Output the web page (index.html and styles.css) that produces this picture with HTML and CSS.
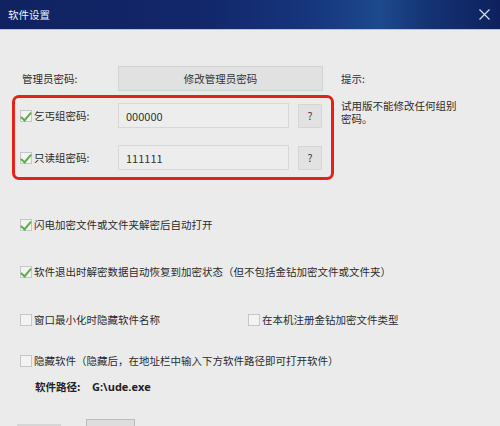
FILE: index.html
```
<!DOCTYPE html>
<html lang="zh-CN">
<head>
    <meta charset="UTF-8">
    <title>软件设置</title>
    <link rel="stylesheet" href="styles.css">
</head>
<body>
<div class="window">
    <div class="titlebar">
        <span class="title">软件设置</span>
        <svg class="close" width="11" height="11" viewBox="0 0 11 11">
            <path d="M0.5 0.5 L10.5 10.5 M10.5 0.5 L0.5 10.5" stroke="#d4dbec" stroke-width="1.3" fill="none"/>
        </svg>
    </div>

    <div class="content">
        <div class="pw-grid">
            <div class="admin-row">
                <span class="admin-label">管理员密码:</span>
                <button class="btn wide">修改管理员密码</button>
            </div>
            <div class="hint-title">提示:</div>

            <div class="group-box">
                <div class="group-row">
                    <label class="check-label"><span class="box checked"></span>乞丐组密码:</label>
                    <input class="field" type="text" value="000000">
                    <button class="btn ask">?</button>
                </div>
                <div class="group-row">
                    <label class="check-label"><span class="box checked"></span>只读组密码:</label>
                    <input class="field" type="text" value="111111">
                    <button class="btn ask">?</button>
                </div>
            </div>
            <p class="hint-text">试用版不能修改任何组别密码。</p>
        </div>

        <div class="options">
            <label class="option first"><span class="box checked"></span>闪电加密文件或文件夹解密后自动打开</label>
            <label class="option gap-a"><span class="box checked"></span>软件退出时解密数据自动恢复到加密状态（但不包括金钻加密文件或文件夹）</label>
            <div class="option-pair gap-b">
                <label class="option"><span class="box"></span>窗口最小化时隐藏软件名称</label>
                <label class="option"><span class="box"></span>在本机注册金钻加密文件类型</label>
            </div>
            <label class="option gap-c"><span class="box"></span>隐藏软件（隐藏后，在地址栏中输入下方软件路径即可打开软件）</label>
            <div class="path-row">
                <span class="path-label">软件路径:</span>
                <span class="path-value">G:\ude.exe</span>
            </div>
        </div>

        <div class="bottom-row">
            <span class="bottom-mark"></span>
            <button class="btn small"></button>
        </div>
    </div>
</div>

<script>
    // 勾选框点击切换
    document.querySelectorAll('.box').forEach(box => {
        box.parentNode.addEventListener('click', () => {
            box.classList.toggle('checked');
        });
    });
</script>
</body>
</html>
```

FILE: styles.css
```
* {
    margin: 0;
    padding: 0;
    box-sizing: border-box;
    font-family: "Noto Sans CJK SC", "Noto Sans", sans-serif;
}

body {
    width: 500px;
    height: 426px;
    overflow: hidden;
    background: #ebebeb;
    color: #2b2b2b;
    font-size: 10.5px;
}

.window {
    height: 100%;
}

/* 标题栏 */
.titlebar {
    height: 30px;
    display: flex;
    align-items: center;
    justify-content: space-between;
    padding: 0 10px 0 8px;
    background: linear-gradient(90deg, #102260 0%, #12276a 40%, #16357c 62%, #1c4a8d 76%, #143272 86%, #0e215e 100%);
    border-bottom: 1px solid #b5c4dc;
}

.title {
    color: #eef1f8;
    font-size: 10.5px;
    line-height: 14px;
}

.close {
    display: block;
}

.content {
    padding: 36px 0 0 12px;
}

/* 密码区 */
.pw-grid {
    display: grid;
    grid-template-columns: 322px auto;
    column-gap: 7px;
    row-gap: 4px;
}

.admin-row {
    display: flex;
    align-items: center;
    margin-left: 8px;
    height: 25px;
}

.admin-label {
    width: 98px;
    padding-left: 2px;
}

.hint-title {
    align-self: center;
}

.btn {
    font-size: 10.5px;
    color: #333;
    background: #e1e1e1;
    border: 1px solid #d3d3d3;
}

.wide {
    width: 205px;
    height: 25px;
}

.group-box {
    border: 3px solid #e2231c;
    border-radius: 7px;
    padding: 5px 0 7px 5px;
    display: flex;
    flex-direction: column;
    gap: 17px;
}

.group-row {
    display: flex;
    align-items: center;
    height: 25px;
}

.check-label {
    width: 98px;
    display: flex;
    align-items: center;
    gap: 2px;
    line-height: 14px;
}

.field {
    width: 171px;
    height: 25px;
    padding-left: 7px;
    background: #ededed;
    border: 1px solid #d8d8d8;
    font-size: 11px;
    color: #333;
}

.ask {
    width: 24px;
    height: 24px;
    margin-left: 9px;
    background: #e2e2e2;
    border-color: #d6d6d6;
}

.hint-text {
    padding-top: 4px;
    width: 122px;
    line-height: 13px;
}

/* 勾选框 */
.box {
    position: relative;
    width: 12px;
    height: 12px;
    flex: none;
    background: #f3f3f3;
    border: 1px solid #c6c6c6;
}

.box.checked::after {
    content: "";
    position: absolute;
    left: 2px;
    top: -1px;
    width: 4px;
    height: 9px;
    border-right: 2px solid #5fae4c;
    border-bottom: 2px solid #5fae4c;
    transform: rotate(40deg);
}

/* 选项区 */
.options {
    margin-left: 8px;
}

.option {
    display: flex;
    align-items: center;
    gap: 2px;
    height: 14px;
    line-height: 14px;
}

.first {
    margin-top: 38px;
}

.gap-a {
    margin-top: 33px;
}

.option-pair {
    display: grid;
    grid-template-columns: 228px auto;
}

.gap-b {
    margin-top: 34px;
}

.gap-c {
    margin-top: 27px;
}

.path-row {
    margin-top: 12px;
    padding-left: 15px;
    display: flex;
    height: 14px;
    line-height: 14px;
    font-weight: bold;
    color: #222;
}

.path-label {
    width: 57px;
}

.path-value {
    font-family: "Open Sans", "Noto Sans", sans-serif;
    font-size: 11px;
}

.bottom-row {
    margin-top: 25px;
    display: flex;
    align-items: flex-start;
    padding-left: 5px;
}

.bottom-mark {
    width: 44px;
    height: 4px;
    margin: 5px 25px 0 0;
    background: #d6d6d6;
}

.small {
    width: 49px;
    height: 20px;
    background: #dedede;
    border-color: #bcbcbc;
}
```
